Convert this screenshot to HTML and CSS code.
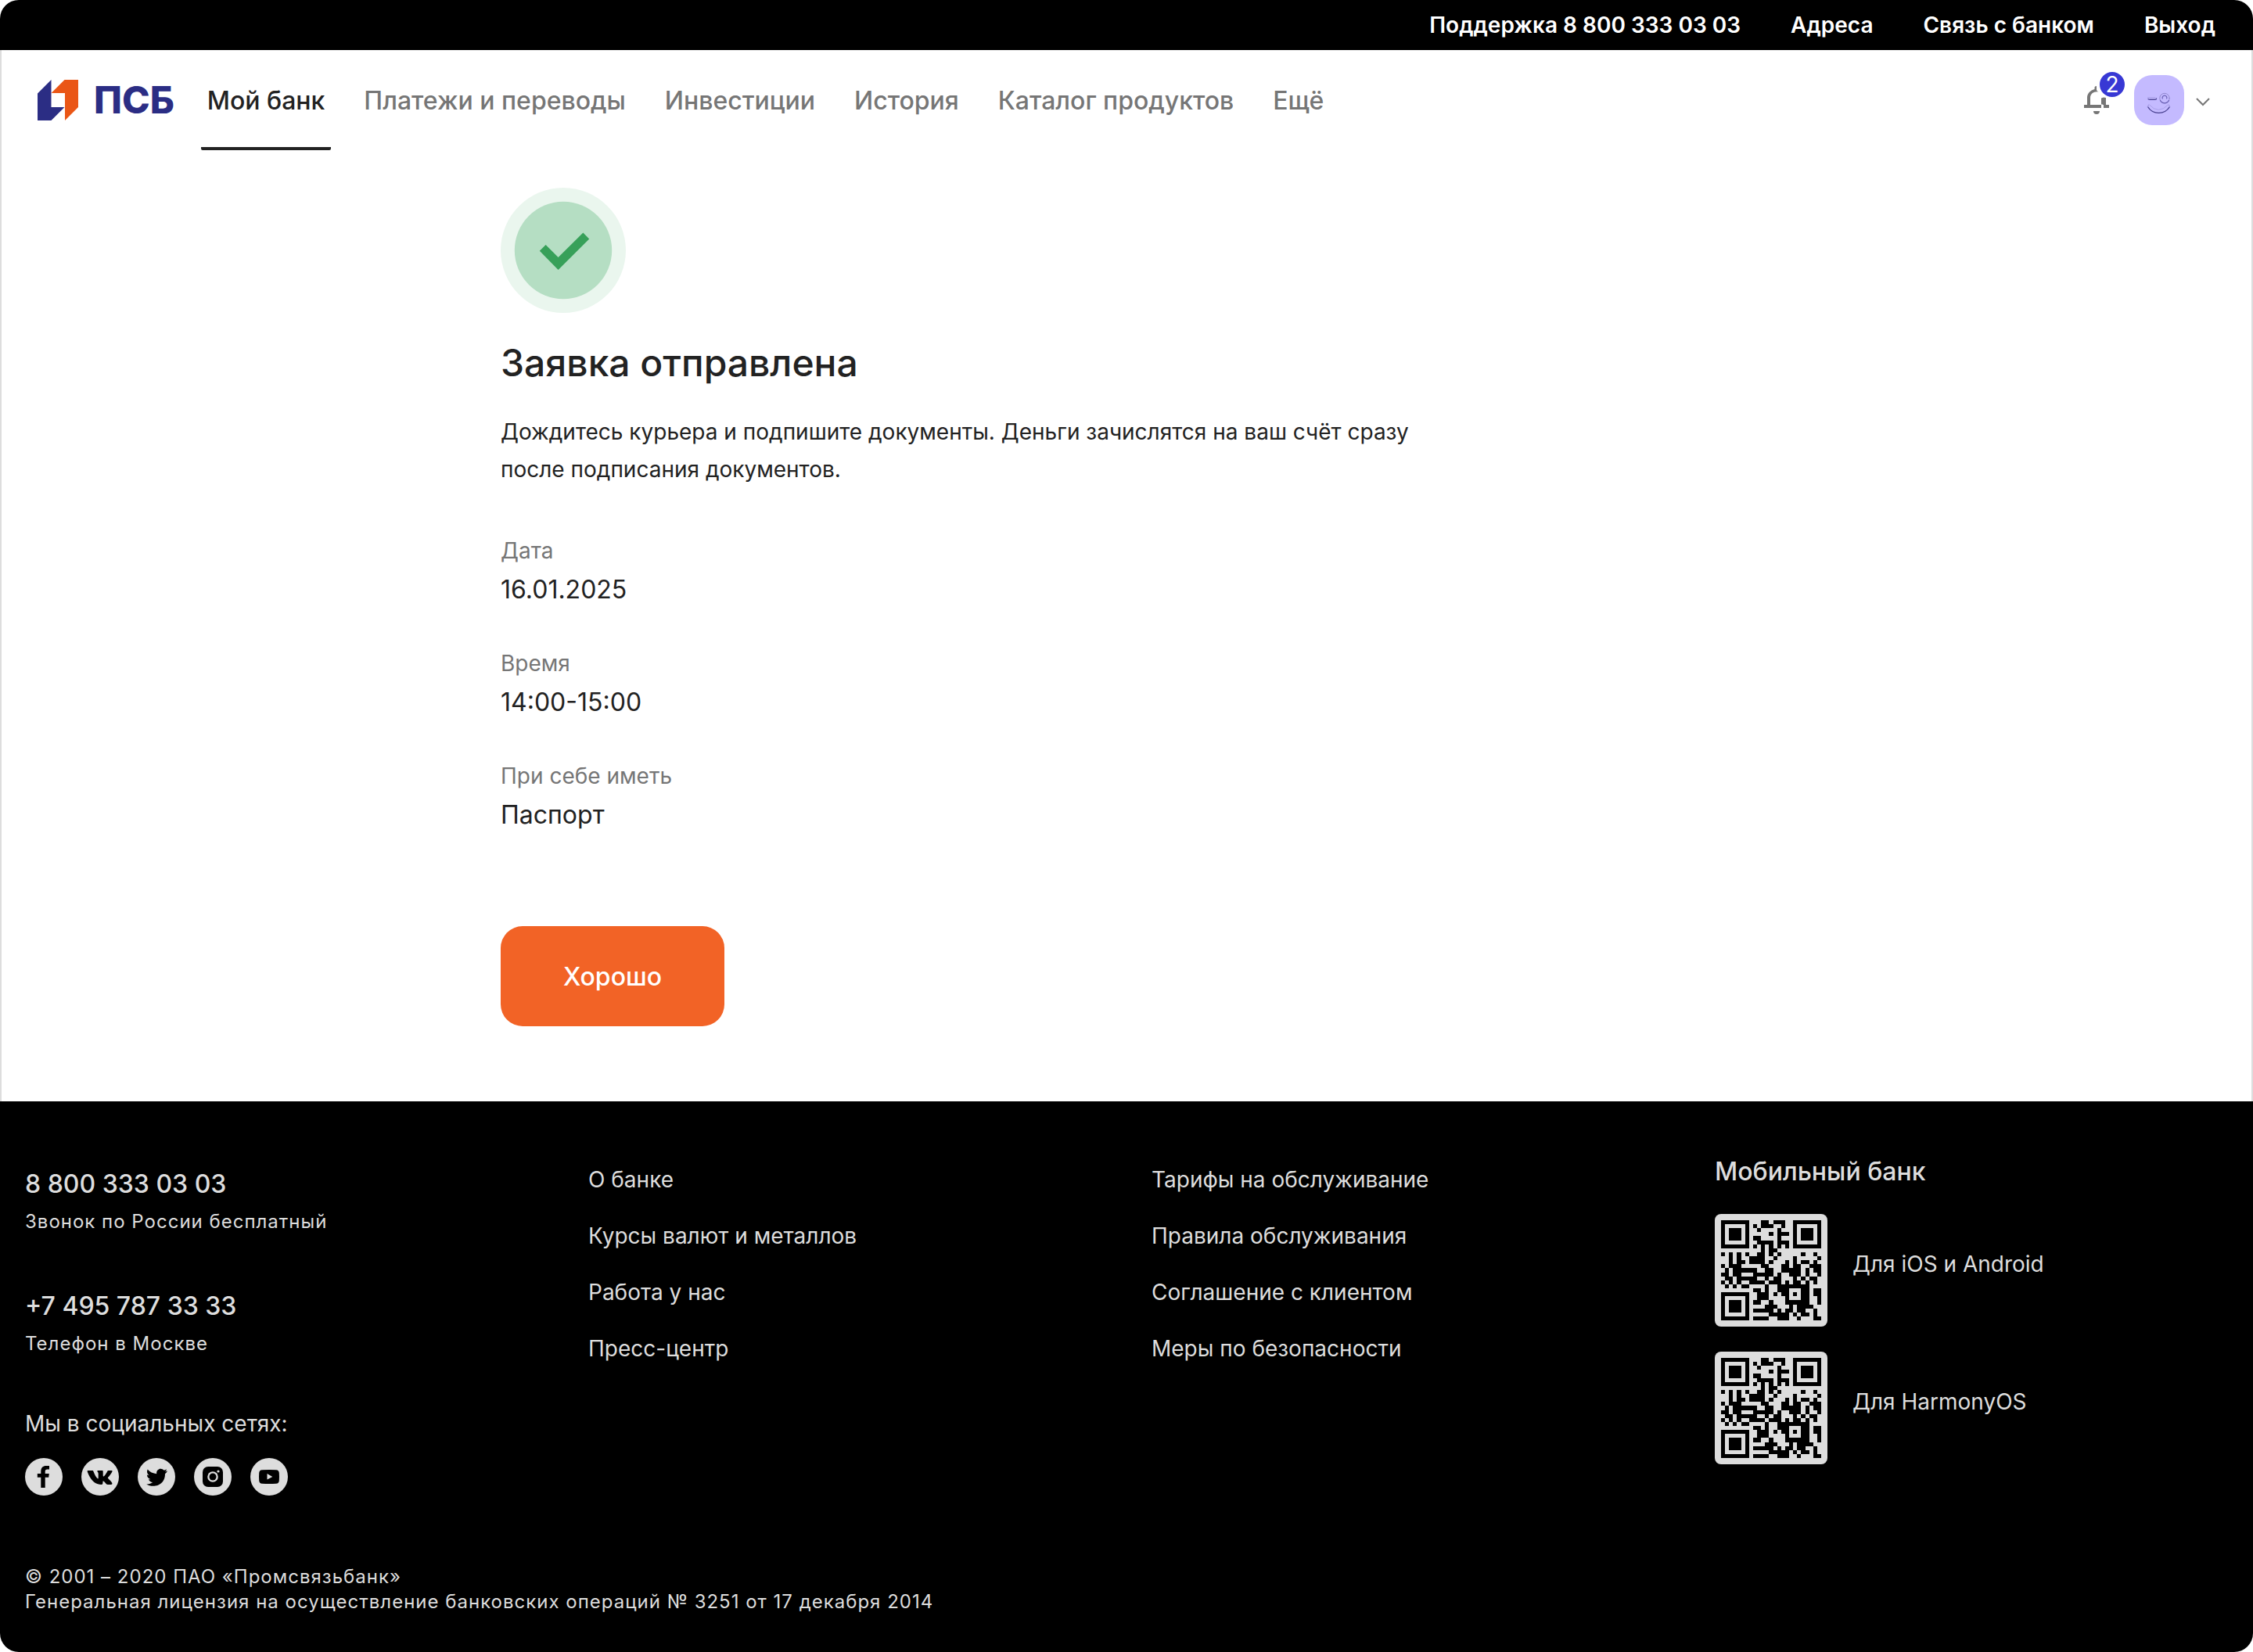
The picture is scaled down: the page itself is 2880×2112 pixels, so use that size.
FILE: index.html
```html
<!DOCTYPE html>
<html lang="ru">
<head>
<meta charset="utf-8">
<meta name="viewport" content="width=device-width, initial-scale=1">
<title>ПСБ — Заявка отправлена</title>
<link rel="stylesheet" href="styles.css">
</head>
<body>
<div class="page">
  <nav class="topbar" aria-label="Служебное меню">
    <a href="#">Поддержка 8 800 333 03 03</a>
    <a href="#">Адреса</a>
    <a href="#">Связь с банком</a>
    <a href="#">Выход</a>
  </nav>

  <header class="header">
    <a class="logo" href="#">
      <svg class="logo-mark" viewBox="0 0 52 52" aria-hidden="true">
        <path fill="#2b2d84" d="M0 17.500 17.500 0V35H34.500L17.500 52H0Z"/>
        <path fill="#ea5616" d="M34.500 0H52V35L35 52V17H17.500Z"/>
      </svg>
      <span class="logo-text">ПСБ</span>
    </a>
    <nav class="menu" aria-label="Главное меню">
      <a class="menu-item active" href="#">Мой банк</a>
      <a class="menu-item" href="#">Платежи и переводы</a>
      <a class="menu-item" href="#">Инвестиции</a>
      <a class="menu-item" href="#">История</a>
      <a class="menu-item" href="#">Каталог продуктов</a>
      <a class="menu-item" href="#">Ещё</a>
    </nav>
    <div class="tools">
      <button class="bell" type="button" aria-label="Уведомления">
        <svg viewBox="0 0 32 36" aria-hidden="true">
          <path fill="#767676" d="M0 24H4V15C4 9.500 8 5.500 13.500 4V2C13.500 .8 14.500 0 16 0V5C16.500 6 17.500 7 18.500 7.500C13 6.500 8 9.500 8 15V24H22V15.500L25 14.500 28 15V24H32V28H25V24H22V28H0ZM12 32H20A4 4 0 0 1 12 32Z"/>
          <path fill="#fff" d="M22 23.500H24V28.500H22Z"/>
        </svg>
        <span class="badge">2</span>
      </button>
      <button class="profile" type="button" aria-label="Профиль">
        <svg class="avatar" viewBox="0 0 64 64" aria-hidden="true">
          <rect width="64" height="64" rx="23" fill="#c4baff"/>
          <g fill="none" stroke-linecap="round">
            <path stroke="#aaa0ea" stroke-width="1" d="M17.500 28.500H27"/>
            <path stroke="#554c9c" stroke-width="1.400" d="M18 30.500Q18.500 31.300 20 31.300H27Q28.500 31.300 28.500 30"/>
            <circle cx="39" cy="29.500" r="6.200" stroke="#9288d0" stroke-width="1"/>
            <path stroke="#6a60b4" stroke-width="1.200" d="M36.300 30A2.900 2.900 0 1 1 41.700 30M33.500 32.500A6.200 6.200 0 0 0 44.500 32.500"/>
            <path stroke="#aaa0ea" stroke-width="1" d="M19.500 38Q31 51 43.500 38"/>
            <path stroke="#484090" stroke-width="1.400" d="M17.500 40.500C24 51 39 51 45.500 40.500"/>
            <path stroke="#9c92de" stroke-width="1" d="M17.500 40.500 18.500 38M45.500 40.500 44.500 38"/>
          </g>
        </svg>
        <svg class="chevron" viewBox="0 0 32 32" aria-hidden="true">
          <path fill="none" stroke="#767676" stroke-width="2" d="M8 14 16 22 24 14"/>
        </svg>
      </button>
    </div>
  </header>

  <main class="main">
    <section class="result">
      <svg class="status" viewBox="0 0 160 160" role="img" aria-label="Успешно">
        <circle cx="80" cy="80" r="80" fill="#eaf6ee"/>
        <circle cx="80" cy="80" r="62.200" fill="#b5dec3"/>
        <path fill="#37a059" d="M49.800 80.800 57.600 73 73.600 89 105.400 57.600 113.200 65.400 73.600 105Z"/>
      </svg>
      <h1 class="title">Заявка отправлена</h1>
      <p class="lead">Дождитесь курьера и подпишите документы. Деньги зачислятся на ваш счёт сразу после подписания документов.</p>
      <dl class="details">
        <div><dt>Дата</dt><dd>16.01.2025</dd></div>
        <div><dt>Время</dt><dd>14:00-15:00</dd></div>
        <div><dt>При себе иметь</dt><dd>Паспорт</dd></div>
      </dl>
      <button class="primary" type="button">Хорошо</button>
    </section>
  </main>

  <footer class="footer">
    <div class="columns">
      <div class="contacts">
        <div class="contact">
          <a class="phone" href="tel:88003330303">8 800 333 03 03</a>
          <p class="caption">Звонок по России бесплатный</p>
        </div>
        <div class="contact">
          <a class="phone" href="tel:+74957873333">+7 495 787 33 33</a>
          <p class="caption">Телефон в Москве</p>
        </div>
        <div class="social">
          <p>Мы в социальных сетях:</p>
          <div class="social-links">
            <a href="#" aria-label="Facebook"><svg viewBox="0 0 48 48"><circle cx="24" cy="24" r="24"/><path class="ink" d="M20.300 38V24.800H15.800V20H20.300V17.200C20.300 12.500 22.800 10 27 10H31V14.600H28.500C26.500 14.600 25.700 15.600 25.700 17.400V20H30.800L30.200 24.800H25.700V38Z"/></svg></a>
            <a href="#" aria-label="ВКонтакте"><svg viewBox="0 0 48 48"><circle cx="24" cy="24" r="24"/><path class="ink" d="M8.500 16H14C15 16 15.200 16.500 15.500 17.300C17 21.500 19.300 25.200 20.800 26.300C21.500 26.700 21.700 26 21.700 25V20C21.600 18 20.500 17.700 20.300 17C20.300 16.400 20.800 16 21.500 16H26.600C27.400 16 27.700 16.500 27.700 17.400V22.800C27.700 23.700 28.500 23.800 29 23.200C30.900 21.300 32.400 18.600 33.200 16.900C33.500 16.300 34 16 34.700 16H38.500C39.500 16 39.800 16.600 39.400 17.400C38.500 19.500 35.700 23 34.300 24.600C33.700 25.300 33.800 25.600 34.400 26.300C35.600 27.600 38.200 29.900 39.200 31.700C39.800 33 39.200 34 38 34H33.800C32.500 34 31.800 33.200 31 32.300C29.600 30.700 28.600 29.600 28 29.600C27.500 29.600 27.400 30.200 27.400 31.500C27.400 33.200 27 34 25.500 34C19.400 34 14.300 30.500 10.700 24C9.200 21.300 8 18.500 7.700 17.200C7.600 16.500 7.800 16 8.500 16Z"/></svg></a>
            <a href="#" aria-label="Twitter"><svg viewBox="0 0 48 48"><circle cx="24" cy="24" r="24"/><path class="ink" d="M38 16.500L35 17.400C36 16.700 36.800 15.700 37.100 14.500L33.800 15.800C31.900 13.900 29.500 13.300 27.300 14.200C25 15.200 23.700 17.500 24.200 20.200C19.400 20 15.500 17.900 12.700 14.600C11.300 17.300 11.900 20.300 14.500 22.200L11.900 21.500C12 24.300 13.600 26.300 16.500 27.200L14 27.300C14.700 29.400 16.500 30.900 19.200 31.100C17.100 32.800 14.300 33.600 11.200 33.400C14.400 35.500 18.500 36.300 22.700 35.600C30.300 34.400 35.300 28 35 20.200C36.100 19.400 37.100 18.300 38 16.500Z"/></svg></a>
            <a href="#" aria-label="Instagram"><svg viewBox="0 0 48 48"><circle cx="24" cy="24" r="24"/><rect class="ink" x="11" y="11" width="26" height="26" rx="7"/><circle cx="24" cy="24" r="6.800"/><circle class="ink" cx="24" cy="24" r="4.500"/><circle cx="31" cy="17" r="1.600"/></svg></a>
            <a href="#" aria-label="YouTube"><svg viewBox="0 0 48 48"><circle cx="24" cy="24" r="24"/><path class="ink" d="M15 15.300Q24 14.600 33 15.300Q36.500 15.500 36.800 19Q37.200 24 36.800 29Q36.500 32.500 33 32.700Q24 33.400 15 32.700Q11.500 32.500 11.200 29Q10.800 24 11.200 19Q11.500 15.500 15 15.300Z"/><path d="M21.500 20 28.300 24 21.500 27.500Z"/></svg></a>
          </div>
        </div>
      </div>
      <nav class="links" aria-label="О банке">
        <a href="#">О банке</a>
        <a href="#">Курсы валют и металлов</a>
        <a href="#">Работа у нас</a>
        <a href="#">Пресс-центр</a>
      </nav>
      <nav class="links" aria-label="Документы">
        <a href="#">Тарифы на обслуживание</a>
        <a href="#">Правила обслуживания</a>
        <a href="#">Соглашение с клиентом</a>
        <a href="#">Меры по безопасности</a>
      </nav>
      <section class="mobile">
        <h2 class="mobile-title">Мобильный банк</h2>
        <div class="app">
          <svg class="qr" viewBox="0 0 25 25" role="img" aria-label="QR-код для iOS и Android">
            <g id="qr-code" fill="none" stroke="#000" shape-rendering="crispEdges">
              <path d="M.5.500H6.500V6.500H.5ZM18.500.500H24.500V6.500H18.500ZM.5 18.500H6.500V24.500H.5Z"/>
              <path fill="#000" stroke="none" d="M2 2H5V5H2ZM20 2H23V5H20ZM2 20H5V23H2Z"/>
              <path transform="translate(0 .5)" d="M10 0h2M13 0h3M8 1h1M10 1h3M15 1h1M9 2h1M14 2h1M12 3h1M14 3h3M8 4h2M14 4h1M9 5h4M14 5h3M8 6h1M10 6h1M12 6h1M14 6h1M16 6h1M10 7h1M12 7h2M0 8h1M2 8h1M4 8h1M6 8h1M9 8h2M12 8h1M14 8h1M20 8h1M23 8h1M2 9h1M4 9h1M7 9h4M13 9h1M18 9h1M24 9h1M2 10h1M4 10h2M7 10h4M12 10h1M16 10h1M18 10h1M20 10h2M23 10h1M0 11h1M2 11h3M10 11h2M15 11h2M18 11h2M22 11h3M1 12h1M3 12h6M11 12h2M15 12h5M21 12h1M23 12h2M0 13h2M3 13h2M8 13h5M14 13h1M17 13h3M21 13h1M24 13h1M1 14h2M4 14h5M11 14h1M13 14h2M18 14h1M20 14h1M22 14h2M0 15h1M2 15h1M4 15h1M7 15h4M12 15h3M16 15h1M18 15h2M21 15h1M23 15h1M1 16h1M3 16h1M5 16h2M11 16h1M14 16h8M8 17h2M11 17h1M14 17h3M20 17h2M23 17h2M9 18h3M13 18h1M15 18h2M18 18h1M20 18h2M23 18h2M9 19h3M16 19h1M20 19h2M24 19h1M8 20h2M12 20h1M16 20h6M24 20h1M11 21h3M17 21h1M19 21h4M8 22h5M14 22h1M16 22h2M19 22h2M23 22h1M12 23h5M18 23h1M20 23h2M23 23h1M8 24h4M14 24h3M19 24h1M23 24h2"/>
            </g>
          </svg>
          <span class="app-name">Для iOS и Android</span>
        </div>
        <div class="app">
          <svg class="qr" viewBox="0 0 25 25" role="img" aria-label="QR-код для HarmonyOS"><use href="#qr-code"/></svg>
          <span class="app-name">Для HarmonyOS</span>
        </div>
      </section>
    </div>
    <p class="legal">© 2001 – 2020 ПАО «Промсвязьбанк»<br>Генеральная лицензия на осуществление банковских операций № 3251 от 17 декабря 2014</p>
  </footer>
</div>
</body>
</html>
```

FILE: styles.css
```css
* {
  box-sizing: border-box;
}

body,
h1,
h2,
p,
dl,
dd {
  margin: 0;
}

body {
  background: #fff;
  color: #222;
  font-family: Inter, "Liberation Sans", sans-serif;
  font-size: 28px;
  line-height: 48px;
}

a {
  color: inherit;
  text-decoration: none;
}

button {
  padding: 0;
  border: 0;
  background: none;
  color: inherit;
  font: inherit;
  cursor: pointer;
}

svg {
  display: block;
}

.page {
  overflow: hidden;
  border-radius: 24px;
}

.topbar {
  display: flex;
  justify-content: flex-end;
  gap: 64px;
  padding: 8px 48px;
  background: #000;
  color: #fff;
  font-weight: 600;
}

.header,
.main {
  border: 0 solid #ddd;
  border-width: 0 2px;
}

.header {
  display: flex;
  align-items: center;
  height: 128px;
  padding: 0 46px;
}

.logo {
  display: flex;
  align-items: center;
  gap: 20px;
}

.logo-mark {
  width: 52px;
  height: 52px;
}

.logo-text {
  color: #2b2d84;
  font-size: 48px;
  font-weight: 800;
}

.menu {
  display: flex;
  align-self: stretch;
  gap: 34px;
  margin-left: 34px;
}

.menu-item {
  display: flex;
  align-items: center;
  padding: 6px 8px 0;
  border-bottom: 4px solid transparent;
  color: #767676;
  font-size: 32px;
  font-weight: 500;
}

.menu-item.active {
  border-color: #222;
  border-radius: 2px;
  color: #222;
}

.tools {
  display: flex;
  align-items: center;
  gap: 32px;
  margin-left: auto;
}

.bell {
  position: relative;
}

.bell svg {
  width: 32px;
  height: 36px;
}

.badge {
  position: absolute;
  top: -20px;
  right: -22px;
  width: 36px;
  height: 36px;
  border: 2px solid #fff;
  border-radius: 50%;
  background: #3838d4;
  color: #fff;
  line-height: 32px;
}

.profile {
  display: flex;
  align-items: center;
  gap: 8px;
}

.avatar {
  width: 64px;
  height: 64px;
}

.chevron {
  width: 32px;
  height: 32px;
}

.main {
  padding: 48px 32px 96px;
}

.result {
  max-width: 1600px;
  margin: 0 auto;
}

.status {
  width: 160px;
  height: 160px;
}

.title {
  margin-top: 32px;
  font-size: 48px;
  font-weight: 500;
  line-height: 64px;
}

.lead {
  max-width: 1200px;
  margin-top: 32px;
}

.details {
  display: grid;
  gap: 44px;
  margin-top: 56px;
}

.details dt {
  color: #767676;
}

.details dd {
  font-size: 32px;
  line-height: 52px;
}

.primary {
  height: 128px;
  margin-top: 116px;
  padding: 2px 80px 0;
  border-radius: 28px;
  background: #f26326;
  color: #fff;
  font-size: 32px;
  font-weight: 500;
}

.footer {
  padding: 64px 0 48px;
  background: #000;
  color: #ddd;
}

.columns {
  display: grid;
  grid-template-columns: repeat(4, 1fr);
}

.columns > * {
  padding: 0 32px;
}

.contacts {
  margin-top: 18px;
}

.contact + .contact {
  margin-top: 60px;
}

.social {
  margin-top: 54px;
}

.phone {
  display: block;
  font-size: 32px;
  font-weight: 500;
}

.caption,
.legal {
  font-size: 24px;
  letter-spacing: 1px;
}

.social-links {
  display: flex;
  gap: 24px;
  margin-top: 20px;
}

.social-links svg {
  width: 48px;
  height: 48px;
  fill: #ddd;
}

.social-links .ink {
  fill: #000;
}

.links {
  display: flex;
  flex-direction: column;
  align-items: flex-start;
  gap: 24px;
  margin-top: 12px;
}

.mobile-title {
  margin-bottom: 28px;
  font-size: 32px;
  font-weight: 500;
  line-height: 52px;
}

.app {
  display: flex;
  align-items: center;
  gap: 32px;
}

.app + .app {
  margin-top: 32px;
}

.app-name {
  padding-bottom: 16px;
}

.qr {
  width: 144px;
  height: 144px;
  padding: 8px;
  border-radius: 8px;
  background: #ddd;
}

.legal {
  margin-top: 88px;
  padding: 0 32px;
  line-height: 32px;
}
```
